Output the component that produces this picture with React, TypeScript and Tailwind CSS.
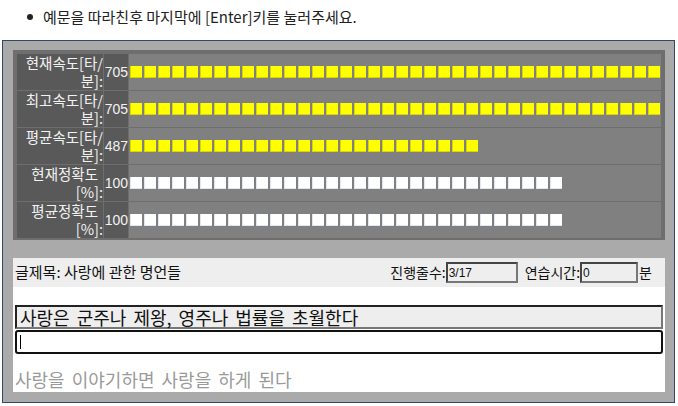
import React from "react";

const KR = { fontFamily: '"Noto Sans CJK KR", "Noto Sans", sans-serif' };
const NUM = { fontFamily: '"Liberation Sans", Arial, sans-serif' };

type Row = { l1: string; l2: string; pad: boolean; val: string; count: number; color: string };

const rows: Row[] = [
  { l1: "현재속도[타/", l2: "분]:", pad: false, val: "705", count: 38, color: "yellow" },
  { l1: "최고속도[타/", l2: "분]:", pad: false, val: "705", count: 38, color: "yellow" },
  { l1: "평균속도[타/", l2: "분]:", pad: false, val: "487", count: 25, color: "yellow" },
  { l1: "현재정확도", l2: "[%]:", pad: true, val: "100", count: 31, color: "white" },
  { l1: "평균정확도", l2: "[%]:", pad: true, val: "100", count: 31, color: "white" },
];

export default function App() {
  return (
    <div className="w-[678px] h-[406px] bg-white overflow-hidden" style={KR}>
      <div className="h-[40px] flex items-start pt-[6px]">
        <div className="w-[43px] flex justify-end pr-[10px] pt-[8px]">
          <div className="w-[6px] h-[6px] rounded-full bg-[#222]" />
        </div>
        <div className="text-[15px] leading-[22px] text-[#222]">예문을 따라친후 마지막에 [Enter]키를 눌러주세요.</div>
      </div>
      <div className="ml-[2px] w-[673px] h-[363px] border border-[#2e4a6b] bg-[#aaaaaa] pt-[9px] pl-[10px] pr-[9px]">
        <div className="bg-[#6e6e6e] pt-[4px] px-[4px] pb-[2px] flex flex-col gap-[1px]">
          {rows.map((r, i) => (
            <div key={i} className="flex h-[36px] gap-[1px]">
              <div className="w-[86px] bg-[#595959] flex flex-col justify-center text-right text-[14.5px] leading-[18px] text-[#f2f2f2] whitespace-nowrap">
                <div className={r.pad ? "pr-[5px]" : ""}>{r.l1}</div>
                <div>{r.l2}</div>
              </div>
              <div className="w-[24px] bg-[#595959] flex items-center justify-end text-[14px] text-[#f2f2f2]" style={NUM}>
                {r.val}
              </div>
              <div className="flex-1 bg-[#808080] flex items-center gap-[2px] pl-[1px]">
                {Array.from({ length: r.count }).map((_, k) => (
                  <div
                    key={k}
                    className={
                      r.color === "yellow"
                        ? "w-[12px] h-[12px] bg-[#ffff00] border-l border-b border-[#d6d600]"
                        : "w-[12px] h-[12px] bg-white border-l border-b border-[#dfe8f0]"
                    }
                  />
                ))}
              </div>
            </div>
          ))}
        </div>
        <div className="mt-[18px] h-[134px] bg-white flex flex-col">
          <div className="h-[29px] bg-[#eeeeee] flex items-center pl-[2px] pr-[13px] text-[14px] text-[#111]">
            <div className="text-[15px]">글제목: 사랑에 관한 명언들</div>
            <div className="flex-1" />
            <div>진행줄수:</div>
            <div className="w-[72px] h-[21px] border-2 border-[#444] border-r-[#777] border-b-[#777] flex items-center pl-[1px] text-[12px]" style={NUM}>
              3/17
            </div>
            <div className="ml-[7px]">연습시간:</div>
            <div className="w-[58px] h-[21px] border-2 border-[#444] border-r-[#777] border-b-[#777] flex items-center pl-[1px] text-[12px]" style={NUM}>
              0
            </div>
            <div className="ml-[1px]">분</div>
          </div>
          <div className="mt-[18px] mx-[2px] h-[24px] bg-[#eeeeee] border-2 border-[#222] border-r-[#777] border-b-[#777] flex items-center pl-[3px] text-[18px] leading-[20px] text-[#111] whitespace-nowrap [word-spacing:3px]">
            사랑은 군주나 제왕, 영주나 법률을 초월한다
          </div>
          <div className="mt-[1px] mx-[2px] h-[24px] bg-white border-2 border-[#111] rounded-[3px] flex items-center pl-[3px]">
            <div className="w-[1px] h-[14px] bg-black" />
          </div>
          <div className="mt-[15px] pl-[2px] text-[18px] leading-[20px] text-[#9a9a9a] whitespace-nowrap [word-spacing:3px]">
            사랑을 이야기하면 사랑을 하게 된다
          </div>
        </div>
      </div>
    </div>
  );
}
